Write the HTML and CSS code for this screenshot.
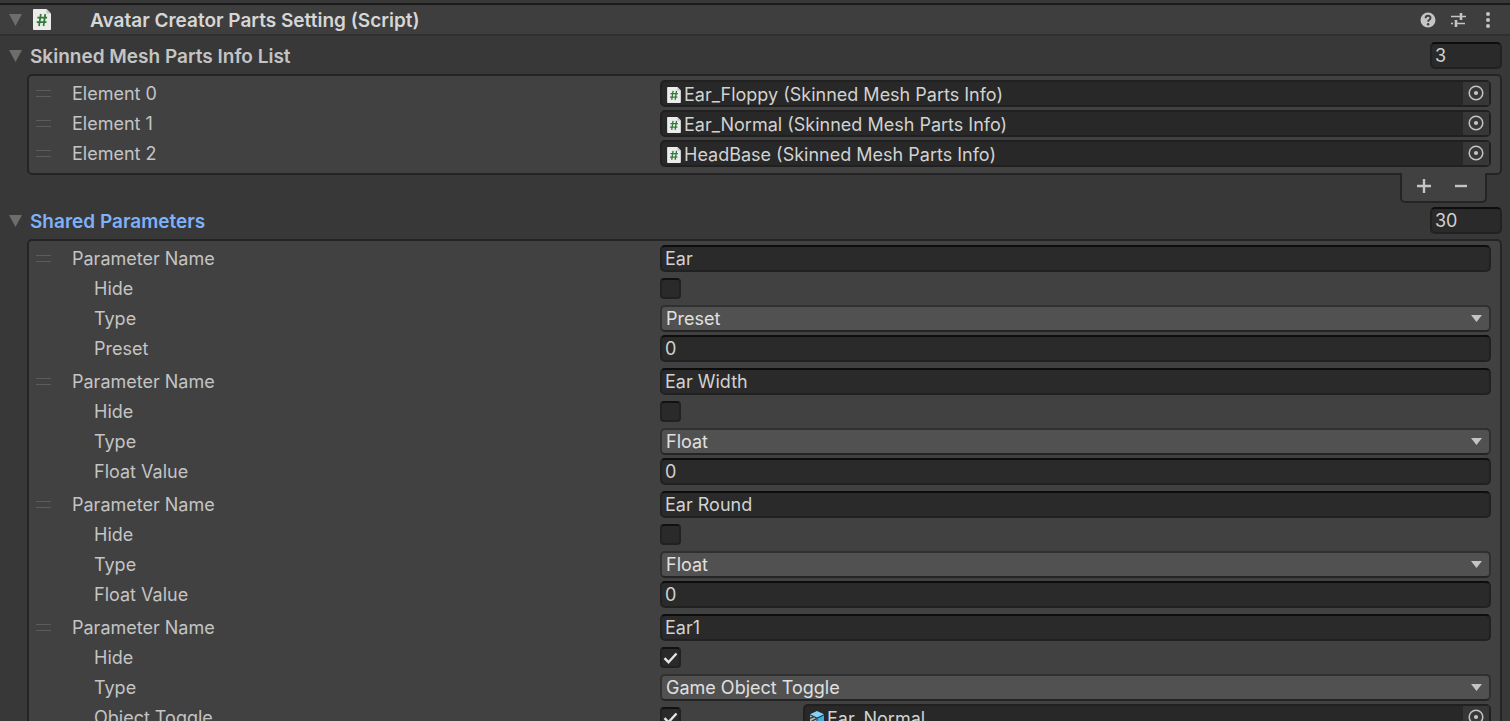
FILE: index.html
```
<!DOCTYPE html>
<html lang="en">
<head>
<meta charset="utf-8">
<title>Avatar Creator Parts Setting</title>
<link rel="stylesheet" href="styles.css">
</head>
<body>
<svg class="defs" aria-hidden="true">
  <symbol id="fold" viewBox="0 0 13 12"><path d="M0 0h13L6.500 12z" fill="#6d6d6d"/></symbol>
  <symbol id="script" viewBox="0 0 18 21"><path d="M1 0h12.500L18 4.500V20a1 1 0 0 1-1 1H1a1 1 0 0 1-1-1V1a1 1 0 0 1 1-1z" fill="#ececec"/><path d="M13.500 0v4.500H18z" fill="#c4c4c4"/><path d="M7.800 5L6 17M12.300 5l-1.800 12M4.300 8.700h9.800M3.700 13.200h9.800" stroke="#2f7a35" stroke-width="1.700" fill="none"/></symbol>
  <symbol id="target" viewBox="0 0 16 16"><circle cx="8" cy="8" r="6.800" fill="none" stroke="#c4c4c4" stroke-width="1.500"/><circle cx="8" cy="8" r="2.100" fill="#c4c4c4"/></symbol>
  <symbol id="cube" viewBox="0 0 15 17"><path d="M7.500 0L15 3.500 7.500 7 0 3.500z" fill="#7fd6fd"/><path d="M15 4.500V13l-7 4V8z" fill="#3fa9e0"/><path d="M0 4.500L7 8v9l-7-4z" fill="#a9b4b9"/><path d="M0 8l4-2M0 12l7-4M2 14.500l5-3" stroke="#303030" stroke-width="1.300"/></symbol>
</svg>
<main class="inspector">
  <header class="component">
    <button class="icon-btn" aria-label="Collapse component"><svg class="fold"><use href="#fold"/></svg></button>
    <svg class="script-lg"><use href="#script"/></svg>
    <h1 class="title">Avatar Creator Parts Setting (Script)</h1>
    <div class="tools">
      <button class="icon-btn" aria-label="Help"><svg class="tool" viewBox="0 0 16 16"><circle cx="8" cy="8" r="7.500" fill="#c4c4c4"/><path d="M5.600 6.200c0-3.200 4.900-3.100 4.900-.2 0 1.900-2.400 1.800-2.400 3.800" stroke="#3e3e3e" stroke-width="1.900" fill="none"/><circle cx="8.100" cy="12.200" r="1.200" fill="#3e3e3e"/></svg></button>
      <button class="icon-btn" aria-label="Presets"><svg class="tool" viewBox="0 0 16 16"><path d="M1 4.500h9M12 4.500h4M1 11.500h2M6 11.500h9" stroke="#c4c4c4" stroke-width="1.500"/><path d="M11 1v7M6 8v7" stroke="#c4c4c4" stroke-width="2.600"/></svg></button>
      <button class="icon-btn" aria-label="More options"><svg class="tool" viewBox="0 0 16 16"><circle cx="8" cy="2" r="2" fill="#c4c4c4"/><circle cx="8" cy="8" r="2" fill="#c4c4c4"/><circle cx="8" cy="14" r="2" fill="#c4c4c4"/></svg></button>
    </div>
  </header>

  <section class="group">
    <div class="foldout">
      <button class="icon-btn" aria-label="Toggle mesh list"><svg class="fold"><use href="#fold"/></svg></button>
      <label class="heading" for="mesh-size">Skinned Mesh Parts Info List</label>
      <input class="field size" id="mesh-size" value="3">
    </div>
    <div class="list">
      <div class="item">
        <div class="row"><span class="grip"></span><label class="label" for="m0">Element 0</label><div class="object"><svg class="doc"><use href="#script"/></svg><input class="ref" id="m0" readonly value="Ear_Floppy (Skinned Mesh Parts Info)"><button class="pick" aria-label="Select object"><svg class="target"><use href="#target"/></svg></button></div></div>
        <div class="row"><span class="grip"></span><label class="label" for="m1">Element 1</label><div class="object"><svg class="doc"><use href="#script"/></svg><input class="ref" id="m1" readonly value="Ear_Normal (Skinned Mesh Parts Info)"><button class="pick" aria-label="Select object"><svg class="target"><use href="#target"/></svg></button></div></div>
        <div class="row"><span class="grip"></span><label class="label" for="m2">Element 2</label><div class="object"><svg class="doc"><use href="#script"/></svg><input class="ref" id="m2" readonly value="HeadBase (Skinned Mesh Parts Info)"><button class="pick" aria-label="Select object"><svg class="target"><use href="#target"/></svg></button></div></div>
      </div>
    </div>
    <div class="footer">
      <button class="icon-btn" aria-label="Add element"><svg class="tool" viewBox="0 0 16 16"><path d="M8 1v14M1 8h14" stroke="#c4c4c4" stroke-width="2.400"/></svg></button>
      <button class="icon-btn" aria-label="Remove element"><svg class="tool" viewBox="0 0 16 16"><path d="M2 8h12" stroke="#c4c4c4" stroke-width="2.400"/></svg></button>
    </div>
  </section>

  <section class="group next">
    <div class="foldout">
      <button class="icon-btn" aria-label="Toggle shared parameters"><svg class="fold"><use href="#fold"/></svg></button>
      <label class="heading active" for="param-size">Shared Parameters</label>
      <input class="field size" id="param-size" value="30">
    </div>
    <div class="list">
      <div class="item">
        <div class="row"><span class="grip"></span><label class="label" for="n0">Parameter Name</label><input class="field" id="n0" value="Ear"></div>
        <div class="row"><label class="label sub" for="h0">Hide</label><input class="check" type="checkbox" id="h0"></div>
        <div class="row"><label class="label sub" for="t0">Type</label><select class="popup" id="t0"><option>Preset</option></select></div>
        <div class="row"><label class="label sub" for="v0">Preset</label><input class="field" id="v0" value="0"></div>
      </div>
      <div class="item">
        <div class="row"><span class="grip"></span><label class="label" for="n1">Parameter Name</label><input class="field" id="n1" value="Ear Width"></div>
        <div class="row"><label class="label sub" for="h1">Hide</label><input class="check" type="checkbox" id="h1"></div>
        <div class="row"><label class="label sub" for="t1">Type</label><select class="popup" id="t1"><option>Float</option></select></div>
        <div class="row"><label class="label sub" for="v1">Float Value</label><input class="field" id="v1" value="0"></div>
      </div>
      <div class="item">
        <div class="row"><span class="grip"></span><label class="label" for="n2">Parameter Name</label><input class="field" id="n2" value="Ear Round"></div>
        <div class="row"><label class="label sub" for="h2">Hide</label><input class="check" type="checkbox" id="h2"></div>
        <div class="row"><label class="label sub" for="t2">Type</label><select class="popup" id="t2"><option>Float</option></select></div>
        <div class="row"><label class="label sub" for="v2">Float Value</label><input class="field" id="v2" value="0"></div>
      </div>
      <div class="item">
        <div class="row"><span class="grip"></span><label class="label" for="n3">Parameter Name</label><input class="field" id="n3" value="Ear1"></div>
        <div class="row"><label class="label sub" for="h3">Hide</label><input class="check" type="checkbox" id="h3" checked></div>
        <div class="row"><label class="label sub" for="t3">Type</label><select class="popup" id="t3"><option>Game Object Toggle</option></select></div>
        <div class="row"><label class="label sub" for="v3">Object Toggle</label><div class="pair"><input class="check" type="checkbox" id="v3" checked><div class="object"><svg class="doc"><use href="#cube"/></svg><input class="ref" aria-label="Toggled object" readonly value="Ear_Normal"><button class="pick" aria-label="Select object"><svg class="target"><use href="#target"/></svg></button></div></div></div>
      </div>
    </div>
  </section>
</main>
</body>
</html>
```
FILE: styles.css
```
* { box-sizing: border-box; }
body {
  margin: 0;
  height: 100vh;
  overflow: hidden;
  background: #383838;
  color: #c4c4c4;
  font: 18px/24px Inter, "Liberation Sans", sans-serif;
}
input, select, button { font: inherit; color: #d2d2d2; margin: 0; }
svg { display: block; flex: none; }
.defs { position: absolute; width: 0; height: 0; }
.inspector { padding-top: 3px; }

.icon-btn { display: block; padding: 0; border: 0; background: none; }
.fold { width: 13px; height: 12px; }
.tool { width: 16px; height: 16px; }

.component {
  display: flex;
  align-items: center;
  height: 33px;
  padding: 0 14px 0 9px;
  background: #3e3e3e;
  border-top: 2px solid #1a1a1a;
  border-bottom: 2px solid #303030;
}
.script-lg { width: 18px; height: 21px; margin-left: 11px; }
.title {
  flex: 1;
  margin: 0 0 0 39px;
  padding-top: 2px;
  font-size: 19px;
  font-weight: 600;
  color: #d6d6d6;
}
.tools { display: flex; gap: 14px; }

.group { padding: 6px 8px 0 9px; }
.group.next { padding-top: 4px; }
.foldout { display: flex; align-items: center; height: 27px; }
.heading { flex: 1; margin-left: 8px; padding-top: 2px; font-size: 19px; font-weight: 600; }
.active { color: #7fb1fb; }

.list {
  display: grid;
  gap: 6px;
  margin: 5px 0 0 18px;
  padding: 4px 9px 6px 7px;
  background: #414141;
  border: 2px solid #242424;
  border-radius: 5px;
}
.item { display: grid; gap: 3px; }
.row {
  display: grid;
  grid-template-columns: 36px minmax(0, 588fr) minmax(0, 831fr);
  align-items: center;
  height: 27px;
}
.grip {
  width: 15px;
  height: 7px;
  border: solid #5c5c5c;
  border-width: 1px 0;
}
.label { grid-column: 2; white-space: nowrap; }
.sub { padding-left: 22px; }

.field {
  width: 100%;
  height: 27px;
  padding: 0 3px;
  background: #2a2a2a;
  border: 2px solid #212121;
  border-top-color: #0d0d0d;
  border-radius: 5px;
}
.size { width: 72px; }

.check {
  appearance: none;
  width: 21px;
  height: 21px;
  background: #2a2a2a;
  border: 2px solid #212121;
  border-top-color: #111;
  border-radius: 4px;
}
.check:checked {
  background: #2a2a2a url("data:image/svg+xml,%3Csvg xmlns='http://www.w3.org/2000/svg' width='17' height='17'%3E%3Cpath d='M2.500 9.200l4 4L14.500 4.500' fill='none' stroke='%23e4e4e4' stroke-width='2.400'/%3E%3C/svg%3E") no-repeat center;
}

.popup {
  appearance: none;
  width: 100%;
  height: 27px;
  padding: 0 24px 0 4px;
  color: #e0e0e0;
  border: 2px solid #303030;
  border-bottom-color: #242424;
  border-radius: 5px;
  background: #515151 url("data:image/svg+xml,%3Csvg xmlns='http://www.w3.org/2000/svg' width='11' height='7'%3E%3Cpath d='M0 0h11L5.500 7z' fill='%23c4c4c4'/%3E%3C/svg%3E") no-repeat right 7px center;
}

.object {
  display: flex;
  flex: 1;
  align-items: center;
  min-width: 0;
  height: 27px;
  padding-left: 5px;
  background: #282828;
  border: 2px solid #202020;
  border-radius: 5px;
}
.doc { width: 14px; height: 16px; margin-top: 2px; }
.ref {
  flex: 1;
  min-width: 0;
  height: 23px;
  padding: 2px 3px 0;
  background: none;
  border: 0;
}
.pick {
  display: flex;
  justify-content: center;
  align-items: flex-start;
  width: 26px;
  height: 23px;
  padding: 3px 0 0;
  background: #373737;
  border: 0;
}
.target { width: 16px; height: 16px; }
.pair { display: flex; align-items: center; gap: 122px; }

.footer {
  position: relative;
  display: flex;
  justify-content: center;
  align-items: flex-start;
  gap: 21px;
  width: 87px;
  height: 30px;
  margin: -2px 15px 0 auto;
  padding: 5px 2px 0 0;
  background: #414141;
  border: 2px solid #242424;
  border-top: 0;
  border-radius: 0 0 5px 5px;
}
```
